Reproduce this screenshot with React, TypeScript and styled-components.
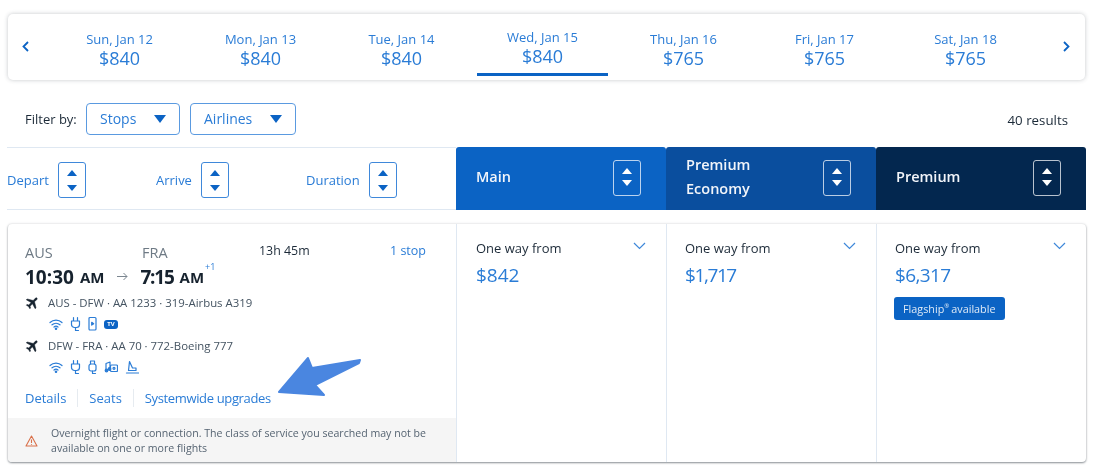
import React from 'react';
import styled, {createGlobalStyle} from 'styled-components';

const GlobalStyle = createGlobalStyle`
  html, body {
    margin: 0;
    padding: 0;
    background: #ffffff;
    font-family: "Open Sans", "Noto Sans", sans-serif;
    color: #36495a;
  }
  * {
    box-sizing: border-box;
  }
`;

const LINK = '#2a7cd6';
const BLUE = '#0b63c4';

const Page = styled.div`
  position: relative;
  width: 1098px;
  height: 469px;
  padding: 14px 12px 0 8px;
  overflow: hidden;
  filter: blur(0.3px);
`;

const DateCard = styled.div`
  display: grid;
  grid-template-columns: 41px repeat(7, 141px) 1fr;
  height: 66px;
  width: 1077px;
  border-radius: 5px;
  background: #fff;
  box-shadow: 0 0 4px rgba(60, 70, 80, 0.3);
`;

const Chevron = styled.div<{$right?: boolean}>`
  display: flex;
  align-items: center;
  justify-content: ${p => (p.$right ? 'flex-end' : 'flex-start')};
  padding: 0 ${p => (p.$right ? '15px' : '0')} 2px ${p => (p.$right ? '0' : '14px')};
  color: ${BLUE};
`;

const DateCol = styled.div<{$active?: boolean}>`
  position: relative;
  display: flex;
  flex-direction: column;
  align-items: center;
  padding-top: ${p => (p.$active ? '14px' : '16px')};
  color: ${LINK};
  font-size: 13px;
  line-height: 18px;

  strong {
    font-size: 18px;
    line-height: 20px;
    font-weight: 400;
  }

  ${p =>
    p.$active &&
    `&::after {
      content: '';
      position: absolute;
      left: 5px;
      right: 5px;
      top: 59px;
      height: 3px;
      background: ${BLUE};
    }`}
`;

const FilterRow = styled.div`
  display: flex;
  align-items: center;
  height: 32px;
  margin-top: 23px;
  padding-left: 17px;
  font-size: 13px;
`;

const FilterLabel = styled.span`
  width: 61px;
  padding-bottom: 1px;
  color: #1c2a38;
`;

const FilterButton = styled.div<{$width: number}>`
  display: flex;
  align-items: center;
  justify-content: space-between;
  width: ${p => p.$width}px;
  height: 32px;
  margin-right: 10px;
  padding: 0 13px 1px 13px;
  border: 1.5px solid #5a9ae0;
  border-radius: 4px;
  color: ${LINK};
  font-size: 14px;
`;

const Caret = styled.span`
  width: 0;
  height: 0;
  border-left: 6.5px solid transparent;
  border-right: 6.5px solid transparent;
  border-top: 8px solid ${BLUE};
`;

const Results = styled.span`
  margin: 1px 18px 0 auto;
  font-size: 13.3px;
  color: #1c2a38;
`;

const HeaderRow = styled.div`
  display: grid;
  grid-template-columns: 448px repeat(3, 210px);
  height: 63px;
  margin-top: 12px;
`;

const SortCell = styled.div`
  display: grid;
  grid-template-columns: 149px 147px 1fr;
  margin-left: -1px;
  border-top: 1px solid #dfe8f2;
  border-bottom: 1px solid #dfe8f2;
`;

const SortItem = styled.div<{$pad: number}>`
  display: flex;
  align-items: center;
  gap: 9px;
  padding-left: ${p => p.$pad}px;
  padding-top: 3px;
  color: ${LINK};
  font-size: 13px;
`;

const SortBox = styled.div<{$light?: boolean}>`
  display: flex;
  flex-direction: column;
  align-items: center;
  justify-content: center;
  gap: 9px;
  width: 28px;
  height: 36px;
  border: 1.5px solid ${p => (p.$light ? 'rgba(255,255,255,0.72)' : '#3f88da')};
  border-radius: 3px;
`;

const Up = styled.span<{$light?: boolean}>`
  width: 0;
  height: 0;
  border-left: 5px solid transparent;
  border-right: 5px solid transparent;
  border-bottom: 6px solid ${p => (p.$light ? '#fff' : BLUE)};
`;

const Down = styled.span<{$light?: boolean}>`
  width: 0;
  height: 0;
  border-left: 5px solid transparent;
  border-right: 5px solid transparent;
  border-top: 6px solid ${p => (p.$light ? '#fff' : BLUE)};
`;

const CabinHeader = styled.div<{$bg: string}>`
  display: flex;
  align-items: center;
  justify-content: space-between;
  padding: 0 25px 1px 20px;
  background: ${p => p.$bg};
  border-radius: 3px 3px 0 0;
  color: #f2f5fa;
  font-size: 14.5px;
  font-weight: 600;
  line-height: 24px;

  span {
    margin-top: -3px;
  }
`;

const ResultCard = styled.div`
  display: grid;
  grid-template-columns: 448px repeat(3, 210px);
  height: 238px;
  margin-top: 14px;
  border-radius: 4px;
  background: #fff;
  box-shadow: 0 1px 2px rgba(40, 50, 60, 0.5), 0 0 3px rgba(40, 50, 60, 0.15);
`;

const FlightCol = styled.div`
  display: flex;
  flex-direction: column;
`;

const FlightBody = styled.div`
  flex: 1;
  padding: 18px 30px 0 17px;
`;

const AirportRow = styled.div`
  display: flex;
  align-items: center;
  height: 20px;
  font-size: 14.5px;
`;

const Airport = styled.span`
  width: 117px;
  color: #6e7a85;
`;

const Dur = styled.span`
  margin-top: -3px;
  color: #1c2a38;
  font-size: 12.4px;
`;

const Stop = styled.span`
  margin-top: -3px;
  margin-left: auto;
  color: ${LINK};
  font-size: 12.5px;
`;

const TimeRow = styled.div`
  display: flex;
  align-items: center;
  height: 25px;
  margin-top: 2px;
  color: #16222e;
  font-size: 19px;
  font-weight: 700;

  small {
    margin: 1px 0 0 6px;
    font-size: 15px;
    font-weight: 700;
  }

  sup {
    margin: -21px 0 0 1px;
    color: ${LINK};
    font-size: 9px;
    font-weight: 400;
  }
`;

const Clock = styled.span<{$spacing?: number}>`
  letter-spacing: ${p => p.$spacing ?? 0}px;
`;

const TimeArrow = styled.svg`
  margin: 0 12px 0 13px;
`;

const SegmentRow = styled.div<{$top: number}>`
  display: flex;
  align-items: center;
  gap: 8px;
  height: 18px;
  margin-top: ${p => p.$top}px;
  color: #445361;
  font-size: 11.4px;
`;

const IconRow = styled.div`
  display: flex;
  align-items: center;
  gap: 7px;
  height: 16px;
  margin-top: 5px;
  padding-left: 24px;
  color: ${LINK};
`;

const TvBadge = styled.span`
  display: inline-flex;
  align-items: center;
  justify-content: center;
  width: 14px;
  height: 9px;
  border-radius: 3px;
  background: ${BLUE};
  color: #fff;
  font-size: 6px;
  font-weight: 700;
`;

const LinkRow = styled.div`
  display: flex;
  align-items: center;
  height: 20px;
  margin-top: 13px;
  color: ${LINK};
  font-size: 13px;

  span + span {
    margin-left: 11px;
    padding-left: 11px;
    border-left: 1px solid #e6ebf0;
  }

  span:last-child {
    letter-spacing: -0.36px;
  }
`;

const Notice = styled.div`
  display: flex;
  align-items: center;
  gap: 13px;
  height: 44px;
  padding: 2px 22px 0 17px;
  background: #f5f5f5;
  border-radius: 0 0 0 4px;
  color: #566472;
  font-size: 10.6px;
  line-height: 15px;
`;

const PriceCol = styled.div`
  position: relative;
  padding: 15px 20px 0 19px;
  border-left: 1px solid #dfe8f2;

  & + & {
    padding-left: 18px;
  }
`;

const OneWay = styled.div`
  color: #1c2a38;
  font-size: 13px;
  line-height: 18px;
`;

const PriceChevron = styled.svg`
  position: absolute;
  top: 18px;
  right: 20px;
`;

const Price = styled.div<{$spacing: number}>`
  margin-top: 5px;
  color: ${LINK};
  font-size: 19px;
  letter-spacing: ${p => p.$spacing}px;
  line-height: 26px;
`;

const Flagship = styled.div`
  display: inline-flex;
  align-items: center;
  height: 23px;
  margin: 9px 0 0 -1px;
  padding: 0 9px;
  border-radius: 3px;
  background: ${BLUE};
  color: #dfeaf7;
  font-size: 10.8px;

  sup {
    font-size: 6px;
    margin: -5px 2px 0 0;
  }
`;

const NoticeIcon = styled.svg`
  flex-shrink: 0;
`;

const Pointer = styled.svg`
  position: absolute;
  left: 270px;
  top: 350px;
`;

const dates = [
    {label: 'Sun, Jan 12', price: '$840'},
    {label: 'Mon, Jan 13', price: '$840'},
    {label: 'Tue, Jan 14', price: '$840'},
    {label: 'Wed, Jan 15', price: '$840', active: true},
    {label: 'Thu, Jan 16', price: '$765'},
    {label: 'Fri, Jan 17', price: '$765'},
    {label: 'Sat, Jan 18', price: '$765'},
];

const Plane = () => (
    <svg width="15" height="15" viewBox="0 0 24 24" fill="#16222e" stroke="#16222e" strokeWidth="0.8">
        <path
            transform="rotate(45 12 12)"
            d="M22 16v-2l-8.5-5V3.5C13.5 2.67 12.83 2 12 2s-1.5.67-1.5 1.5V9L2 14v2l8.5-2.5V19L8 20.5V22l4-1 4 1v-1.5L13.5 19v-5.5L22 16z"
        />
    </svg>
);

const Line = ({children, w = 14}: {children: React.ReactNode; w?: number}) => (
    <svg width={w} height="16" viewBox={`0 0 ${w} 16`} fill="none" stroke="currentColor" strokeWidth="1.2"
         strokeLinecap="round" strokeLinejoin="round">
        {children}
    </svg>
);

const Wifi = () => (
    <Line>
        <path d="M1 6.5c3.4-3.2 8.6-3.2 12 0"/>
        <path d="M3 8.8c2.3-2 5.7-2 8 0"/>
        <path d="M5 11c1.2-1 2.8-1 4 0"/>
        <circle cx="7" cy="12.8" r="0.7" fill="currentColor"/>
    </Line>
);

const PlugIcon = () => (
    <Line w={11}>
        <path d="M3.5 1.5v3.5M7.5 1.5v3.5M1.5 5h8v3.5a3 3 0 0 1-3 3h-2a3 3 0 0 1-3-3z"/>
        <path d="M5.5 11.5v3h3"/>
    </Line>
);

const PhoneIcon = () => (
    <Line w={9}>
        <rect x="1" y="1.5" width="7" height="12.5" rx="1"/>
        <path d="M3.7 6.3l2 1.4-2 1.4z" fill="currentColor"/>
    </Line>
);

const UsbIcon = () => (
    <Line w={9}>
        <path d="M2.5 5V2h4v3"/>
        <rect x="1" y="5" width="7" height="7" rx="2"/>
        <path d="M4.5 12v2.5h3"/>
    </Line>
);

const MusicIcon = () => (
    <Line>
        <path d="M2 11.5V4.5l4-1.5v7"/>
        <circle cx="2.5" cy="11.5" r="1.3" fill="currentColor"/>
        <circle cx="5.5" cy="10" r="1.3" fill="currentColor"/>
        <rect x="6.5" y="6" width="7" height="6.5" rx="1"/>
        <circle cx="10" cy="9.3" r="1"/>
    </Line>
);

const SeatIcon = () => (
    <Line>
        <path d="M4.5 2.5l3 6.5h3.5v2.5H3.5z"/>
        <path d="M1.5 14h12"/>
    </Line>
);

const SortArrows = ({light}: {light?: boolean}) => (
    <SortBox $light={light}>
        <Up $light={light}/>
        <Down $light={light}/>
    </SortBox>
);

const PriceCell = ({price, spacing = 0, flagship}: {price: string; spacing?: number; flagship?: boolean}) => (
    <PriceCol>
        <OneWay>One way from</OneWay>
        <PriceChevron width="13" height="8" viewBox="0 0 13 8" fill="none" stroke="#3f88da" strokeWidth="1.2">
            <path d="M1 1l5.5 5.5L12 1"/>
        </PriceChevron>
        <Price $spacing={spacing}>{price}</Price>
        {flagship && <Flagship>Flagship<sup>®</sup> available</Flagship>}
    </PriceCol>
);

const App = () => (
    <Page>
        <GlobalStyle/>
        <DateCard>
            <Chevron>
                <svg width="7" height="11" viewBox="0 0 7 11" fill="none" stroke="currentColor" strokeWidth="1.8">
                    <path d="M6 1L1.5 5.5 6 10"/>
                </svg>
            </Chevron>
            {dates.map(date => (
                <DateCol key={date.label} $active={date.active}>
                    {date.label}
                    <strong>{date.price}</strong>
                </DateCol>
            ))}
            <Chevron $right>
                <svg width="7" height="11" viewBox="0 0 7 11" fill="none" stroke="currentColor" strokeWidth="1.8">
                    <path d="M1 1l4.5 4.5L1 10"/>
                </svg>
            </Chevron>
        </DateCard>

        <FilterRow>
            <FilterLabel>Filter by:</FilterLabel>
            <FilterButton $width={94}>Stops<Caret/></FilterButton>
            <FilterButton $width={106}>Airlines<Caret/></FilterButton>
            <Results>40 results</Results>
        </FilterRow>

        <HeaderRow>
            <SortCell>
                <SortItem $pad={0}>Depart<SortArrows/></SortItem>
                <SortItem $pad={0}>Arrive<SortArrows/></SortItem>
                <SortItem $pad={3}>Duration<SortArrows/></SortItem>
            </SortCell>
            <CabinHeader $bg="#0b63c4"><span>Main</span><SortArrows light/></CabinHeader>
            <CabinHeader $bg="#0a4e9e"><span>Premium<br/>Economy</span><SortArrows light/></CabinHeader>
            <CabinHeader $bg="#03274f"><span>Premium</span><SortArrows light/></CabinHeader>
        </HeaderRow>

        <ResultCard>
            <FlightCol>
                <FlightBody>
                    <AirportRow>
                        <Airport>AUS</Airport>
                        <Airport>FRA</Airport>
                        <Dur>13h 45m</Dur>
                        <Stop>1 stop</Stop>
                    </AirportRow>
                    <TimeRow>
                        <Clock>10:30</Clock><small>AM</small>
                        <TimeArrow width="11" height="9" viewBox="0 0 11 9" fill="none" stroke="#7b8690">
                            <path d="M0 4.5h10M6.5 1l3.5 3.5L6.5 8"/>
                        </TimeArrow>
                        <Clock $spacing={-1.2}>7:15</Clock><small>AM</small>
                        <sup>+1</sup>
                    </TimeRow>
                    <SegmentRow $top={4}><Plane/>AUS - DFW · AA 1233 · 319-Airbus A319</SegmentRow>
                    <IconRow>
                        <Wifi/><PlugIcon/><PhoneIcon/><TvBadge>TV</TvBadge>
                    </IconRow>
                    <SegmentRow $top={4}><Plane/>DFW - FRA · AA 70 · 772-Boeing 777</SegmentRow>
                    <IconRow>
                        <Wifi/><PlugIcon/><UsbIcon/><MusicIcon/><SeatIcon/>
                    </IconRow>
                    <LinkRow>
                        <span>Details</span>
                        <span>Seats</span>
                        <span>Systemwide upgrades</span>
                    </LinkRow>
                </FlightBody>
                <Notice>
                    <NoticeIcon width="13" height="12" viewBox="0 0 13 12" fill="none" stroke="#d9704a"
                                strokeWidth="1.1">
                        <path d="M6.5 1L12 11H1z" strokeLinejoin="round"/>
                        <path d="M6.5 4.5v3.5M6.5 9v.8"/>
                    </NoticeIcon>
                    <span>Overnight flight or connection. The class of service you searched may not be available on one or more flights</span>
                </Notice>
            </FlightCol>
            <PriceCell price="$842"/>
            <PriceCell price="$1,717" spacing={-1.4}/>
            <PriceCell price="$6,317" spacing={-0.6} flagship/>
        </ResultCard>

        <Pointer width="94" height="50" viewBox="0 0 94 50">
            <path
                fill="#4a86e0"
                stroke="#4a86e0"
                strokeWidth="2"
                strokeLinejoin="round"
                d="M9 42L38 8l4 10 48-8-1 3-44 22 9 10z"
            />
        </Pointer>
    </Page>
);

export default App;
